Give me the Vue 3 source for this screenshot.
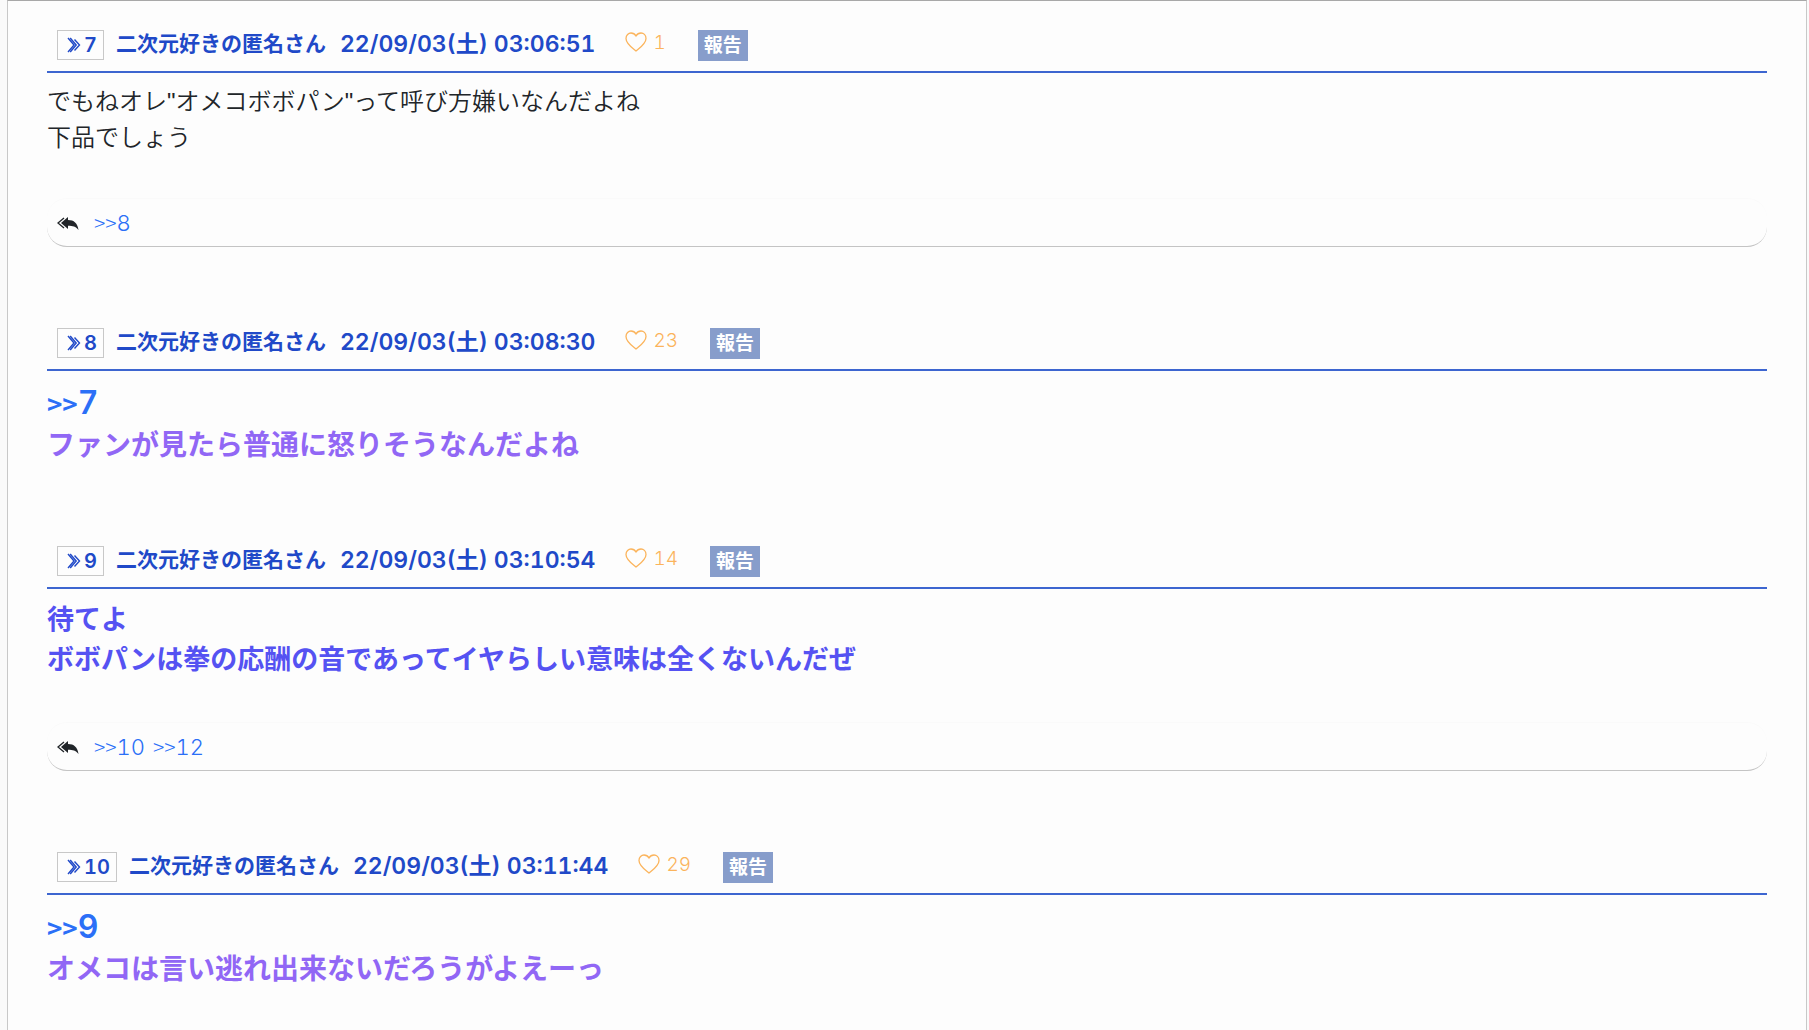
<script setup>
const posts = [
  {
    no: 7,
    time: '03:06:51',
    likes: 1,
    style: 'plain',
    lines: ['でもねオレ"オメコボボパン"って呼び方嫌いなんだよね', '下品でしょう'],
    replies: [8]
  },
  {
    no: 8,
    time: '03:08:30',
    likes: 23,
    anchor: 7,
    style: 'hot',
    lines: ['ファンが見たら普通に怒りそうなんだよね'],
    replies: []
  },
  {
    no: 9,
    time: '03:10:54',
    likes: 14,
    style: 'warm',
    lines: ['待てよ', 'ボボパンは拳の応酬の音であってイヤらしい意味は全くないんだぜ'],
    replies: [10, 12]
  },
  {
    no: 10,
    time: '03:11:44',
    likes: 29,
    anchor: 9,
    style: 'hot',
    lines: ['オメコは言い逃れ出来ないだろうがよえーっ'],
    replies: []
  }
]
</script>

<template>
  <main class="thread">
    <article v-for="post in posts" :key="post.no" class="post">
      <header class="post-head">
        <button class="res-no" type="button">
          <svg class="res-arrow" viewBox="0 0 14 16" aria-hidden="true">
            <path d="M1 1 L7 8 L1 15 M3.200 1 L9.200 8 L3.200 15 M7.500 2.500 L12.500 8 L7.500 13.500" />
          </svg>
          <span>{{ post.no }}</span>
        </button>
        <div class="meta">
          <span class="name">二次元好きの匿名さん</span>
          <time class="date">22/09/03(土) {{ post.time }}</time>
          <button class="like" type="button">
            <svg class="heart" viewBox="0 0 22 20" aria-hidden="true">
              <path d="M11 19 C8 16.500 1 12 1 6.500 C1 3 3.500 1 6 1 C8.500 1 10 2.300 11 4 C12 2.300 13.500 1 16 1 C18.500 1 21 3 21 6.500 C21 12 14 16.500 11 19 Z" />
            </svg>
            <span>{{ post.likes }}</span>
          </button>
        </div>
        <button class="report" type="button">報告</button>
      </header>

      <div class="body" :class="post.style">
        <a v-if="post.anchor" class="anchor" href="#"><span class="gt">&gt;&gt;</span>{{ post.anchor }}</a>
        <p v-for="line in post.lines" :key="line">{{ line }}</p>
      </div>

      <footer v-if="post.replies.length" class="replies">
        <svg class="reply-icon" viewBox="0 0 22 14" aria-hidden="true">
          <path class="outline" d="M7 1 L1 6 L7 11" />
          <path d="M4 6 L11 0 V3 C17 3 20.500 6 21.500 13 C18.500 9.500 16 8.800 11 8.800 V12 Z" />
        </svg>
        <a v-for="no in post.replies" :key="no" class="reply-link" href="#"><span class="gt">&gt;&gt;</span>{{ no }}</a>
      </footer>
    </article>
  </main>
</template>

<style>
body {
  background: #fafafa;
}
</style>

<style scoped>
.thread {
  box-sizing: border-box;
  min-height: 100vh;
  max-height: 100vh;
  overflow: hidden;
  margin: 0 2px 0 7px;
  padding: 22px 39px 0 39px;
  border: 1px solid #c8c8c8;
  border-top-color: #a8a8a8;
  border-bottom: 0;
  background: #fdfdfd;
  font-family: Inter, "Noto Sans CJK JP", sans-serif;
  font-variant-numeric: tabular-nums;
  color: #212529;
}
button {
  margin: 0;
  border: 0;
  background: none;
  font: inherit;
  cursor: pointer;
}
a {
  color: #2b6ff7;
  text-decoration: none;
}
p {
  margin: 0;
}
.post {
  margin-bottom: 73px;
}
.post-head {
  display: flex;
  align-items: center;
  box-sizing: border-box;
  height: 50px;
  padding: 0 10px 4px;
  border-bottom: 2px solid #3d66d0;
  color: #2049c8;
  font-size: 23px;
  font-weight: 600;
}
.res-no {
  display: flex;
  align-items: center;
  gap: 3px;
  height: 30px;
  padding: 0 6px 0 9px;
  border: 1px solid #c8c8c8;
  color: inherit;
  font-size: 20px;
  line-height: 28px;
}
.res-arrow {
  width: 14px;
  height: 16px;
  fill: none;
  stroke: #2049c8;
  stroke-width: 1.4;
}
.meta {
  display: flex;
  align-items: center;
  padding-bottom: 6px;
}
.name {
  margin-left: 12px;
  font-size: 21px;
}
.date {
  margin-left: 14px;
}
.like {
  display: flex;
  align-items: center;
  gap: 6px;
  margin-left: 30px;
  padding: 0;
  color: #fbb45c;
  font-size: 19px;
  font-weight: 300;
}
.heart {
  width: 22px;
  height: 20px;
  fill: none;
  stroke: #fbb45c;
  stroke-width: 1.3;
}
.report {
  height: 31px;
  margin-left: 32px;
  padding: 0 6px;
  background: #879dcb;
  color: #fff;
  font-size: 19px;
  line-height: 31px;
}
.body {
  display: flex;
  flex-direction: column;
  align-items: flex-start;
  padding-top: 11px;
}
.plain {
  font-family: "Liberation Sans", "Noto Sans CJK JP", sans-serif;
  font-size: 24px;
  font-weight: 350;
  line-height: 36px;
}
.hot {
  color: #9167f5;
  font-size: 28px;
  font-weight: 600;
  line-height: 42px;
}
.warm {
  color: #5552f2;
  font-size: 27px;
  font-weight: 600;
  line-height: 40px;
}
.anchor {
  font-size: 32px;
}
.gt {
  font-family: "Noto Sans CJK JP", sans-serif;
}
.anchor .gt {
  font-size: 26px;
}
.replies {
  display: flex;
  align-items: center;
  box-sizing: border-box;
  height: 49px;
  margin-top: 42px;
  padding: 0 10px 2px;
  border-top: 1px solid #fafafa;
  border-bottom: 1px solid #c4c4c4;
  border-radius: 20px;
  font-size: 22px;
  font-weight: 300;
}
.post:has(.replies) {
  margin-bottom: 74px;
}
.reply-icon {
  width: 22px;
  height: 14px;
  margin-top: 5px;
  margin-right: 7px;
  fill: #212529;
}
.reply-icon .outline {
  fill: none;
  stroke: #212529;
  stroke-width: 1.3;
}
.reply-link {
  margin-left: 8px;
}
.reply-link .gt {
  font-size: 21px;
}
</style>
